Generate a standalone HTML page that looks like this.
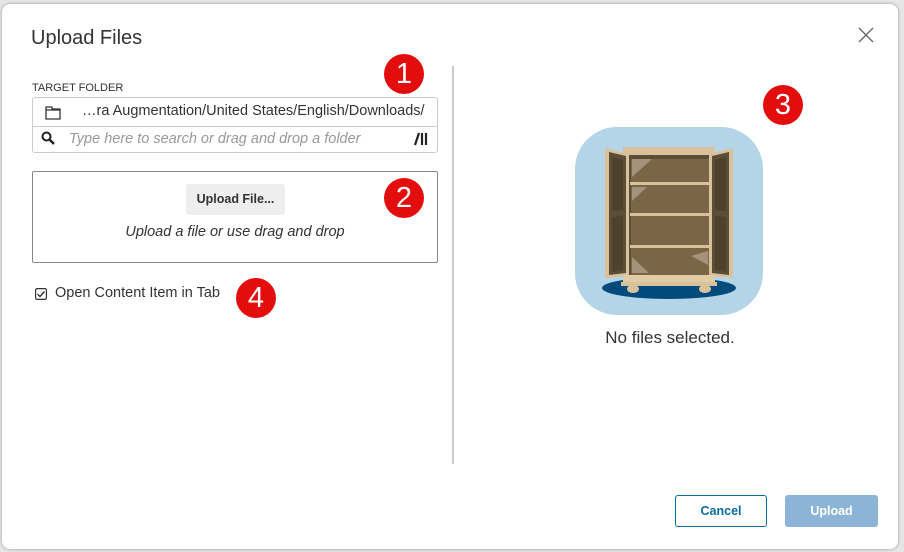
<!DOCTYPE html>
<html><head><style>
body{margin:0;width:904px;height:552px;background:#e6e6e6;font-family:"Liberation Sans",sans-serif;position:relative;overflow:hidden}
.dlg{position:absolute;left:2px;top:4px;width:896px;height:545px;background:#fff;border-radius:8px;box-shadow:0 0 3px rgba(0,0,0,.35)}
.a{position:absolute}
.badge{position:absolute;width:40px;height:40px;border-radius:50%;background:#e30d0d;color:#fff;font-size:29px;text-align:center;line-height:40px}
</style></head><body>
<div class="dlg"></div>
<div class="a" style="left:31px;top:27px;font-size:20px;color:#333">Upload Files</div>
<svg class="a" style="left:858px;top:27px" width="16" height="16"><path d="M1 1L15 15M15 1L1 15" stroke="#666" stroke-width="1.3"/></svg>
<div class="a" style="left:32px;top:82px;font-size:11px;color:#333">TARGET FOLDER</div>
<div class="a" style="left:32px;top:97px;width:404px;height:54px;border:1px solid #ccc;border-radius:3px"></div>
<div class="a" style="left:33px;top:126px;width:404px;height:1px;background:#ccc"></div>
<svg class="a" style="left:45px;top:106px" width="16" height="14"><path d="M1 1h6v2h8v10H1z M1 4h14" fill="none" stroke="#333" stroke-width="1.3"/></svg>
<div class="a" style="left:82px;top:103px;font-size:14.5px;color:#333">…ra Augmentation/United States/English/Downloads/</div>
<svg class="a" style="left:41px;top:131px" width="15" height="15"><circle cx="5.5" cy="5.5" r="4" fill="none" stroke="#222" stroke-width="2"/><path d="M8.5 8.5L13 13" stroke="#222" stroke-width="2.5"/></svg>
<div class="a" style="left:69px;top:131px;font-size:14.5px;color:#999;font-style:italic">Type here to search or drag and drop a folder</div>
<svg class="a" style="left:414px;top:132px" width="14" height="14"><path d="M1 13L5 1" stroke="#222" stroke-width="2.2"/><path d="M8 1v12M12 1v12" stroke="#222" stroke-width="2.2"/></svg>
<div class="a" style="left:32px;top:171px;width:404px;height:90px;border:1px solid #888;border-radius:2px"></div>
<div class="a" style="left:186px;top:184px;width:99px;height:31px;background:#eee;border-radius:3px;font-size:12.5px;font-weight:bold;color:#333;text-align:center;line-height:31px">Upload File...</div>
<div class="a" style="left:32px;top:224px;width:406px;text-align:center;font-size:14.5px;font-style:italic;color:#333">Upload a file or use drag and drop</div>
<svg class="a" style="left:35px;top:288px" width="12" height="12"><rect x="0.6" y="0.6" width="10.8" height="10.8" rx="1.5" fill="none" stroke="#333" stroke-width="1.2"/><path d="M2.5 6l2.5 2.5 4.5-5" fill="none" stroke="#333" stroke-width="1.4"/></svg>
<div class="a" style="left:55px;top:285px;font-size:14.5px;color:#333">Open Content Item in Tab</div>
<div class="badge" style="left:384px;top:54px">1</div>
<div class="badge" style="left:384px;top:178px">2</div>
<div class="badge" style="left:763px;top:85px">3</div>
<div class="badge" style="left:236px;top:278px">4</div>
<div class="a" style="left:452px;top:66px;width:2px;height:398px;background:#ccc"></div>
<svg class="a" style="left:575px;top:127px" width="188" height="188">
<rect width="188" height="188" rx="42" fill="#b4d5e8"/>
<ellipse cx="94" cy="161" rx="67" ry="11" fill="#004a7c"/>
<rect x="48" y="26" width="92" height="124" fill="#5c4d36"/>
<rect x="56" y="32" width="78" height="118" fill="#7a6646"/>
<rect x="48" y="20" width="92" height="8" fill="#d9c29b"/>
<rect x="55" y="55" width="79" height="3" fill="#d9c29b"/>
<rect x="55" y="86" width="79" height="3" fill="#d9c29b"/>
<rect x="55" y="118" width="79" height="3" fill="#d9c29b"/>
<path d="M57 32h20l-20 18z" fill="#a4927a"/><path d="M57 60h15l-15 14z" fill="#a4927a"/>
<path d="M133 124v14l-17-9z" fill="#a4927a"/><path d="M57 130l17 16H57z" fill="#a4927a"/>
<path d="M30 21l24 6v122l-24 2z" fill="#d9c29b"/><path d="M34 25l17 4v117l-17 2z" fill="#5c4d36"/>
<path d="M37 30l11 3v50l-11 1z M37 90l11-1v54l-11 2z" fill="#4e412d"/>
<path d="M158 21l-24 6v122l24 2z" fill="#d9c29b"/><path d="M154 25l-17 4v117l17 2z" fill="#5c4d36"/>
<path d="M151 30l-11 3v50l11 1z M151 90l-11-1v54l11 2z" fill="#4e412d"/>
<rect x="48" y="148" width="92" height="8" fill="#e2cca5"/>
<rect x="46" y="155" width="96" height="4" fill="#d9c29b"/>
<ellipse cx="58" cy="162" rx="6" ry="4" fill="#d9c29b"/><ellipse cx="130" cy="162" rx="6" ry="4" fill="#d9c29b"/>
</svg>
<div class="a" style="left:452px;top:328px;width:436px;text-align:center;font-size:17px;color:#333">No files selected.</div>
<div class="a" style="left:675px;top:495px;width:90px;height:30px;border:1px solid #0a6aa1;border-radius:3px;color:#0a6aa1;font-weight:bold;font-size:12.5px;text-align:center;line-height:30px">Cancel</div>
<div class="a" style="left:785px;top:495px;width:93px;height:32px;background:#8cb4d6;border-radius:3px;color:#fff;font-weight:bold;font-size:12.5px;text-align:center;line-height:32px">Upload</div>
</body></html>
